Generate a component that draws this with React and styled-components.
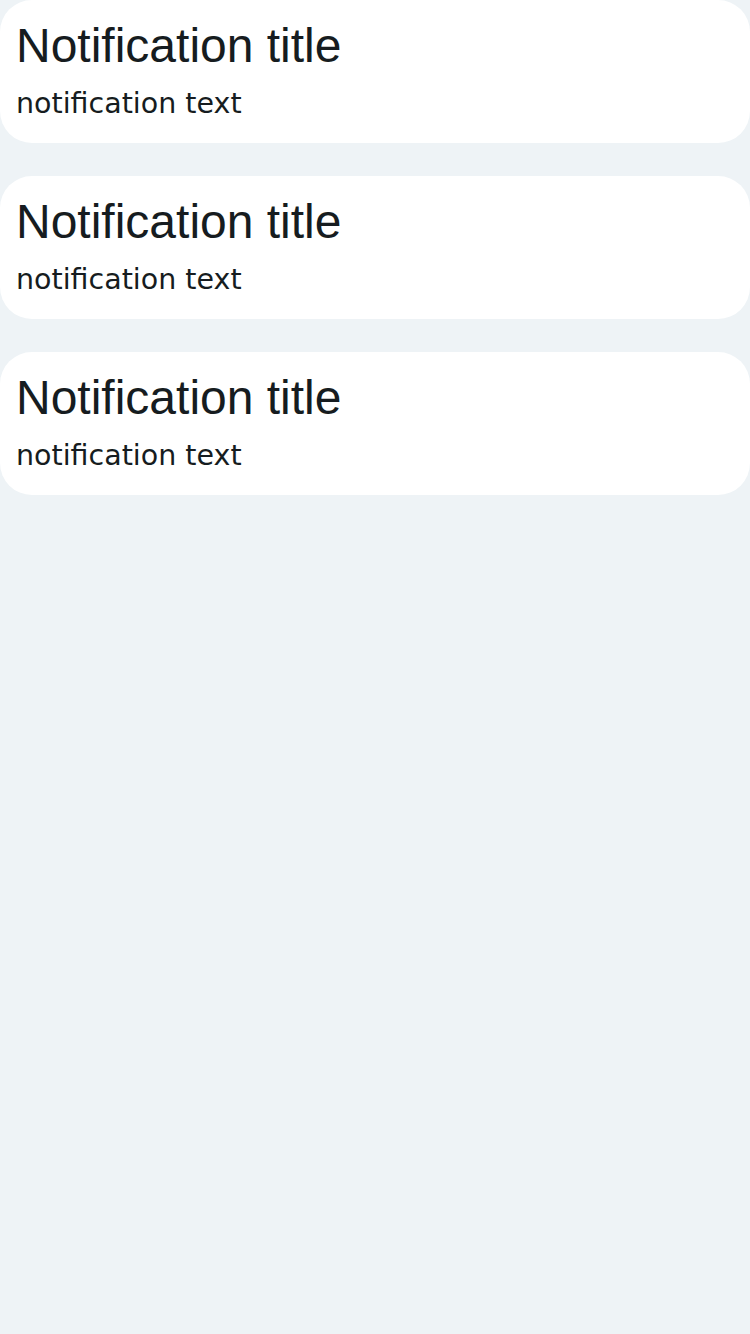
import React from 'react';
import styled, { createGlobalStyle } from 'styled-components';

const GlobalStyle = createGlobalStyle`
html, body {
  margin: 0;
  padding: 0;
  background-color: #eef3f6;
}
`;

const Page = styled.div`
display: flex;
flex-direction: column;
gap: 33px;
min-height: 1334px;
background-color: #eef3f6;
`;

const Card = styled.div`
display: flex;
flex-direction: column;
gap: 14px;
height: 143px;
box-sizing: border-box;
padding: 18px 16px 0 16px;
background-color: #ffffff;
border-radius: 32px;
`;

const Title = styled.div`
font-family: "Liberation Sans", Arial, sans-serif;
font-size: 48px;
color: #161c20;
`;

const Text = styled.div`
font-family: "DejaVu Sans", sans-serif;
font-size: 28.5px;
color: #161c20;
`;

const notifications = [
  { id: 1, title: 'Notification title', text: 'notification text' },
  { id: 2, title: 'Notification title', text: 'notification text' },
  { id: 3, title: 'Notification title', text: 'notification text' },
];

function App() {
  return (
    <>
      <GlobalStyle />
      <Page>
        {notifications.map(n => (
          <Card key = {n.id}>
            <Title>{n.title}</Title>
            <Text>{n.text}</Text>
          </Card>
        ))}
      </Page>
    </>
  );
}

export default App;
